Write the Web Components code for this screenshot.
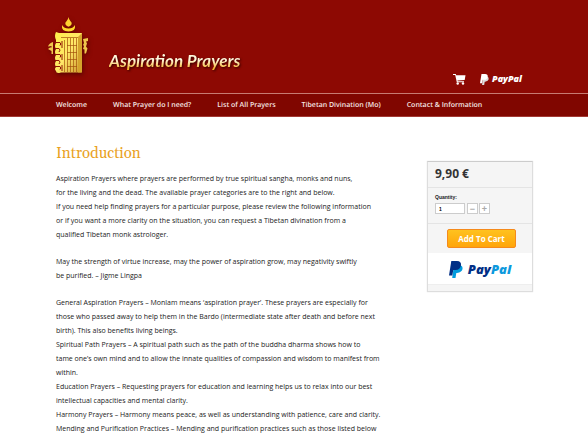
<!DOCTYPE html>
<html lang="en">
<head>
<meta charset="utf-8">
<title>Aspiration Prayers</title>
<style>
body{margin:0;background:#fff;font-family:"Open Sans","Noto Sans",sans-serif;font-size:7px;line-height:14px;color:#222;height:100vh;overflow:hidden}
</style>
</head>
<body>
<prayer-page></prayer-page>
<script>
const define = (name, html) => {
  const t = document.createElement('template');
  t.innerHTML = html;
  customElements.define(name, class extends HTMLElement {
    constructor() {
      super();
      this.attachShadow({mode: 'open'}).append(t.content.cloneNode(true));
    }
  });
};

define('temple-mark', `
<style>:host{display:block;width:42px;height:64px;filter:drop-shadow(1px 2px 2px #3008)}svg{display:block}</style>
<svg width="42" height="64" viewBox="0 0 42 64" aria-hidden="true">
  <defs><linearGradient id="g" x1="0" y1="0" x2="1" y2="1"><stop offset="0" stop-color="#fff04a"/><stop offset=".5" stop-color="#ffe768"/><stop offset="1" stop-color="#c9952a"/></linearGradient></defs>
  <path fill="#ffd030" d="M21.500 3q.3 2.500 2 4.300a3 3 0 1 1-4 0q1.700-1.800 2-4.300z"/>
  <path fill="#ffd62a" d="M15 11q2 3.500 6.500 3.500T28 11q1 6.500-6.500 6.500T15 11z"/>
  <path fill="url(#g)" d="M9 18l3 1h23l-.5 39.500H14q-5 1.500-5-1.500q-2-2 0-4q-2-3 0-6q-2-3 0-6q-2-3 0-6q-2-3 0-6v-3q-2-4 0-8z"/>
  <path fill="#d5a32b" d="M31 23l4-4v39.500h-4z"/>
  <path fill="none" stroke="#a3520b" stroke-width=".7" d="M14 23.500h17M17.500 26v32M20.500 24v34M23.500 24v34M26.500 24v34M29.500 24v34M20 31.500h10M20 38.500h10M20 45.500h10M20 52.500h10"/>
  <path fill="none" stroke="#8e1505" stroke-width="1" d="M8 28.500h5q1.500 1.500 0 3M8 34.500h4q2 1.500 0 3.500M8 40.500h5q1.500 1.500 0 3M8 46.500h4q2 1.500 0 3.500M8 52.500h5q1.500 1.500 0 3M15 27v7M15 40v6M15 51v6"/>
  <path fill="#efc64c" d="M6 28v12H4.500v-3L1 35l2-1.500h1.500V32L1 32.500Q2 29 6 28zM36 25l5-1v3l-2 .5 1 2-1 3 1.500 2-1.500 5h-1.500v-4L36 35l1-3-1-1 1-2z"/>
</svg>`);

define('cart-icon', `
<style>:host{display:block}svg{display:block}</style>
<svg width="13" height="12" viewBox="0 0 13 12" aria-hidden="true" fill="#fff"><path d="M0 1h2.800l.4 1.300H12.500L11.700 6.900 4.500 7.600l.2.600H11v1H3.800L2.200 2H0z"/><circle cx="4.700" cy="10.500" r="1.200"/><circle cx="10" cy="10.500" r="1.200"/></svg>`);

define('paypal-logo', `
<style>
:host{display:inline-flex;align-items:center;gap:3px;font:italic 800 9px/12px "Open Sans",sans-serif;--back:#ddd;--front:#fff;--name:#fff;--tail:#fff}
:host([large]){gap:5px;font-size:13px;line-height:18px;--back:#009cde;--front:#012f86;--name:#012f86;--tail:#0c99dd}
svg{display:block;width:9px;height:11px}
:host([large]) svg{width:14px;height:17px}
b{color:var(--name)}i{color:var(--tail)}b,i{font-weight:800}
</style>
<svg viewBox="0 0 14 17" aria-hidden="true"><path fill="var(--back)" d="M5 4h6q3 1 2.500 4t-5.500 4H7.300L6.500 17H3.200z"/><path fill="var(--front)" d="M2.300 0H8q4.500.3 4 4.200Q11.300 9 6.500 9H4.300L3.300 14.500H0z"/></svg><span><b>Pay</b><i>Pal</i></span>`);

define('site-header', `
<style>
:host{display:block;background:#8d0903;color:#fff}
.top{display:flex;justify-content:space-between;align-items:flex-end;min-height:93px;box-sizing:border-box;padding:14px 66px 8px 47px}
.brand{display:flex;align-items:center;gap:20px;margin-bottom:7px;color:inherit;text-decoration:none}
.name{font:italic 700 17px/22px Lato,sans-serif;margin-top:30px;color:#ffe9a0;background:linear-gradient(#fff8dc 45%,#f5b52c 85%);-webkit-background-clip:text;background-clip:text;-webkit-text-fill-color:transparent;filter:drop-shadow(1px 1px 1px #300)}
.tools{display:flex;align-items:center;gap:14px}
.tools a{text-decoration:none}
</style>
<div class="top"><a class="brand" href="#"><temple-mark></temple-mark><span class="name">Aspiration Prayers</span></a>
<div class="tools"><a href="#cart" aria-label="Cart"><cart-icon></cart-icon></a><paypal-logo></paypal-logo></div></div>
<slot></slot>`);

define('main-nav', `
<style>
:host{display:flex;gap:26px;padding:2px 56px 0;background:#800600;border-top:1px solid #c77b72;border-bottom:1px solid #a33a34;font-size:7px;font-weight:600;line-height:20px;text-rendering:geometricPrecision}
::slotted(a){color:#f6e6e4;text-decoration:none;white-space:nowrap}
</style><slot></slot>`);

define('buy-box', `
<style>
:host{display:block;border:1px solid #ddd;border-top-color:#ccc;background:#f5f5f5;color:#333;box-shadow:0 0 1px #ddd}
.price{font:700 12px/23px "Open Sans",sans-serif;padding:0 7px 2px;border-bottom:1px solid #e4e4e4}
.qty{padding:5px 7px 9px;border-bottom:1px solid #e4e4e4}
label{display:block;font:700 5px/9px "Liberation Sans",sans-serif;color:#222}
.row{display:flex;gap:2px;margin-top:1px}
input,button{box-sizing:border-box;margin:0;padding:0;border:1px solid #ccc;background:#fff}
input{width:30px;height:11px;padding-left:3px;font:700 5px/9px "Liberation Sans",sans-serif}
.row button{width:11px;height:11px;font:700 9px/8px "Liberation Sans",sans-serif;color:#aaa}
.row button:last-child{margin-left:-1px}
.add{display:flex;justify-content:flex-end;padding:5px 16px 5px}
.add button{width:69px;height:19px;border:1px solid #f58a1c;border-radius:2px;background:linear-gradient(#ffc21f,#ffa50a);color:#fff;font:700 8px/16px "Open Sans",sans-serif}
.pay{background:#fff;display:flex;justify-content:center;padding:7px 0 6px}
.foot{height:6px;border-top:1px solid #eee}
</style>
<div class="price">9,90 €</div>
<div class="qty"><label for="q">Quantity:</label><div class="row"><input id="q" value="1"><button aria-label="Less">−</button><button aria-label="More">+</button></div></div>
<div class="add"><button>Add To Cart</button></div>
<div class="pay"><paypal-logo large></paypal-logo></div><div class="foot"></div>`);

define('intro-article', `
<style>
:host{display:block}
h1{margin:0 0 7px;font:400 15px/22px Gelasio,"DejaVu Serif",serif;color:#e9a11d}
::slotted(p){margin:0 0 13px}
</style><h1><slot name="title"></slot></h1><slot></slot>`);

define('prayer-page', `
<style>
:host{display:block}
main{display:grid;grid-template-columns:1fr 106px;align-items:start;gap:42px;padding:26px 55px 0 56px}
buy-box{margin-top:18px}
p{white-space:nowrap}
</style>
<site-header><main-nav><a href="#">Welcome</a><a href="#">What Prayer do I need?</a><a href="#">List of All Prayers</a><a href="#">Tibetan Divination (Mo)</a><a href="#">Contact &amp; Information</a></main-nav></site-header>
<main><intro-article><span slot="title">Introduction</span>
<p>Aspiration Prayers where prayers are performed by true spiritual sangha, monks and nuns,<br>for the living and the dead. The available prayer categories are to the right and below.<br>If you need help finding prayers for a particular purpose, please review the following information<br>or if you want a more clarity on the situation, you can request a Tibetan divination from a<br>qualified Tibetan monk astrologer.</p>
<p>May the strength of virtue increase, may the power of aspiration grow, may negativity swiftly<br>be purified. – Jigme Lingpa</p>
<p>General Aspiration Prayers – Monlam means ‘aspiration prayer’. These prayers are especially for<br>those who passed away to help them in the Bardo (intermediate state after death and before next<br>birth). This also benefits living beings.<br>Spiritual Path Prayers – A spiritual path such as the path of the buddha dharma shows how to<br>tame one’s own mind and to allow the innate qualities of compassion and wisdom to manifest from<br>within.<br>Education Prayers – Requesting prayers for education and learning helps us to relax into our best<br>intellectual capacities and mental clarity.<br>Harmony Prayers – Harmony means peace, as well as understanding with patience, care and clarity.<br>Mending and Purification Practices – Mending and purification practices such as those listed below</p>
</intro-article><buy-box></buy-box></main>`);
</script>
</body>
</html>
